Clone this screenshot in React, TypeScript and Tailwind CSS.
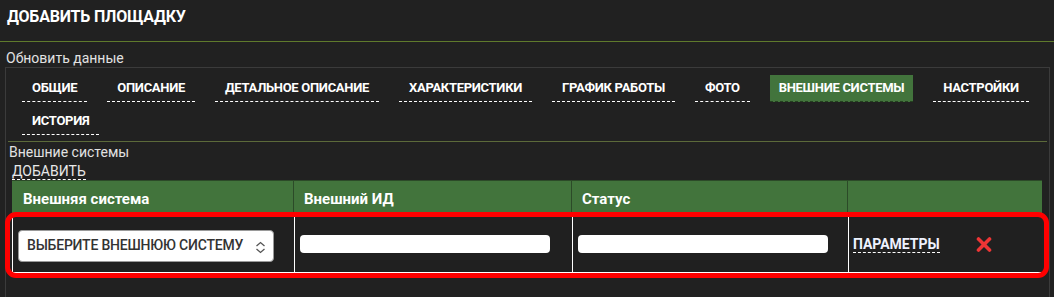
const tabs = [
  "Общие",
  "Описание",
  "Детальное описание",
  "Характеристики",
  "График работы",
  "Фото",
  "Внешние системы",
  "Настройки",
  "История",
];

const ACTIVE = "Внешние системы";

const UpDown = () => (
  <svg width="11" height="13" viewBox="0 0 11 13" fill="none" stroke="#555" strokeWidth="1.3">
    <path d="M1.5 5 L5.5 1.5 L9.5 5" />
    <path d="M1.5 8 L5.5 11.5 L9.5 8" />
  </svg>
);

const RedCross = () => (
  <svg width="16" height="15" viewBox="0 0 16 15" fill="none" stroke="#ee3535" strokeWidth="3.6" strokeLinecap="round">
    <path d="M2.5 2 L13.5 13" />
    <path d="M13.5 2 L2.5 13" />
  </svg>
);

export default function App() {
  return (
    <div className="h-[297px] w-[1054px] overflow-hidden bg-[#212121] font-['Roboto',sans-serif] text-white">
      {/* Title */}
      <div className="h-[41px] px-[7px] pt-[7px] text-[16px] font-bold leading-[20px] tracking-[-0.2px]">
        ДОБАВИТЬ ПЛОЩАДКУ
      </div>
      <div className="h-px bg-[#5f7a2c]" />

      <div className="mt-[8px] px-[6px] text-[14px] leading-[16px] text-[#e2e2e2]">Обновить данные</div>

      {/* Panel */}
      <div className="ml-[5px] mr-[4px] mt-px h-[260px] border border-[#3b3b3b]">
        <ul className="flex flex-wrap gap-x-[20px] gap-y-[6px] pl-[16px] pr-[8px] pt-[7px]">
          {tabs.map((t) => (
            <li
              key={t}
              className={
                t === ACTIVE
                  ? "flex h-[27px] items-center border-b border-dashed border-[#24401f] bg-[#42743c] px-[9px] text-[13px] font-bold uppercase tracking-[-0.3px]"
                  : "flex h-[27px] items-center border-b border-dashed border-white px-[10px] text-[13px] font-bold uppercase tracking-[-0.3px]"
              }
            >
              {t}
            </li>
          ))}
        </ul>

        <div className="mx-[2px] mt-[6px] h-px bg-[#5c6a3a]" />

        <div className="px-[3px] pt-[2px] text-[14px] leading-[16px] text-[#e2e2e2]">Внешние системы</div>
        <div className="flex px-[6px] pt-[3px]">
          <span className="border-b border-dashed border-white text-[14px] leading-[16px] text-[#e8e8e8]">
            ДОБАВИТЬ
          </span>
        </div>

        {/* Table */}
        <div className="ml-[6px] w-[1030px]">
          <div className="grid h-[33px] grid-cols-[281px_278px_276px_1fr] border-t border-[#2c4a28] bg-[#42743c] text-[15px] font-bold leading-[18px]">
            <div className="px-[11px] pt-[9px]">Внешняя система</div>
            <div className="border-l border-[#2c4a28] px-[10px] pt-[9px]">Внешний ИД</div>
            <div className="border-l border-[#2c4a28] px-[10px] pt-[9px]">Статус</div>
            <div className="border-l border-[#2c4a28]" />
          </div>

          <div className="relative">
            <div className="grid h-[60px] grid-cols-[281px_278px_276px_1fr] border-b border-l border-white bg-[#202020]">
              <div className="flex items-center pl-[5px] pt-[6px]">
                <div className="flex h-[32px] w-[256px] items-center justify-between rounded-[4px] border border-[#9a9a9a] bg-white pl-[8px] pr-[7px] text-[14px] font-medium tracking-[-0.2px] text-[#333]">
                  <span>ВЫБЕРИТЕ ВНЕШНЮЮ СИСТЕМУ</span>
                  <span className="pt-[3px]">
                    <UpDown />
                  </span>
                </div>
              </div>
              <div className="flex items-center border-l border-white pl-[5px] pt-[3px]">
                <div className="h-[18px] w-[250px] rounded-[4px] bg-white" />
              </div>
              <div className="flex items-center border-l border-white pl-[5px] pt-[3px]">
                <div className="h-[18px] w-[250px] rounded-[4px] bg-white" />
              </div>
              <div className="flex items-center border-l border-white pl-[4px] pt-[3px]">
                <span className="border-b border-dashed border-white text-[14px] font-bold leading-[16px] text-[#eef2ff]">
                  ПАРАМЕТРЫ
                </span>
                <span className="ml-[36px] flex">
                  <RedCross />
                </span>
              </div>
            </div>
            {/* highlight around the row */}
            <div className="pointer-events-none absolute -bottom-[5px] -left-[7px] -right-[7px] -top-px rounded-[11px] border-[5px] border-[#ff0000]" />
          </div>
        </div>
      </div>
    </div>
  );
}
